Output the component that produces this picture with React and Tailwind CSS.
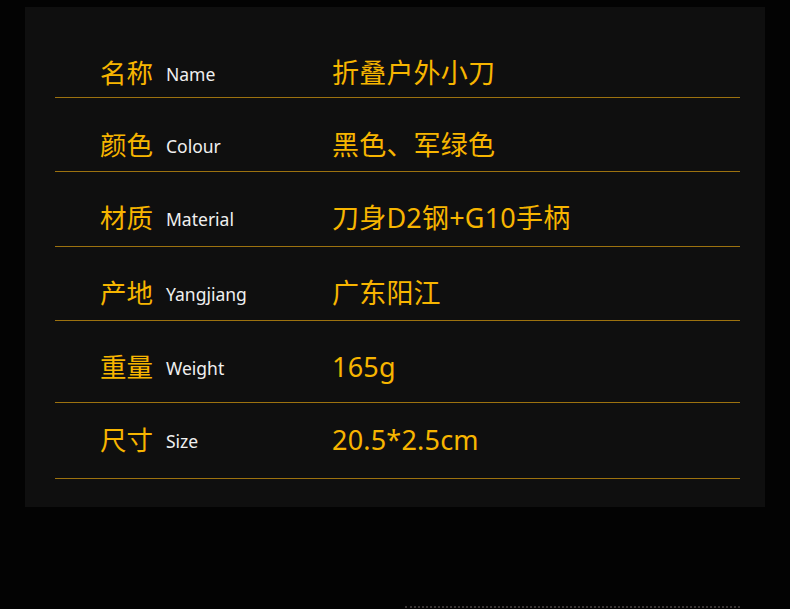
import React from 'react';

// spec rows: h = row height (line to line), pt = top padding of text line
const rows = [
  { zh: '名称', en: 'Name', value: '折叠户外小刀', h: 74, pt: 34 },
  { zh: '颜色', en: 'Colour', value: '黑色、军绿色', h: 74, pt: 32 },
  { zh: '材质', en: 'Material', value: '刀身D2钢+G10手柄', h: 75, pt: 31 },
  { zh: '产地', en: 'Yangjiang', value: '广东阳江', h: 74, pt: 31 },
  { zh: '重量', en: 'Weight', value: '165g', h: 82, pt: 31 },
  { zh: '尺寸', en: 'Size', value: '20.5*2.5cm', h: 76, pt: 22 },
];

const font = { fontFamily: '"Noto Sans", "Noto Sans CJK SC", sans-serif' };

const App = () => {
  return (
    <div className="min-h-screen bg-[#030303] pt-[7px] px-[25px] overflow-hidden" style={font}>
      {/* Spec panel */}
      <div className="w-[740px] h-[500px] bg-[#0f0f0f] pt-[17px]">
        {rows.map((r) => (
          <div
            key={r.zh}
            className="ml-[30px] mr-[25px] border-b border-[#9c720f] box-border"
            style={{ height: r.h, paddingTop: r.pt }}
          >
            <div className="flex items-baseline pl-[45px] leading-[30px]">
              <div className="w-[232px] flex items-baseline">
                <span className="text-[26.5px] text-[#f7b500]">{r.zh}</span>
                <span className="relative -top-[2px] ml-[13px] text-[17.5px] text-[#f0f0f0]">{r.en}</span>
              </div>
              <span className="text-[27px] text-[#f7b500] tracking-[0.2px]">{r.value}</span>
            </div>
          </div>
        ))}
      </div>

      {/* cut-off content at bottom edge */}
      <div className="mt-[99px] ml-[380px] w-[335px] border-t-2 border-dotted border-[#3a3535]" />
    </div>
  );
};

export default App;
